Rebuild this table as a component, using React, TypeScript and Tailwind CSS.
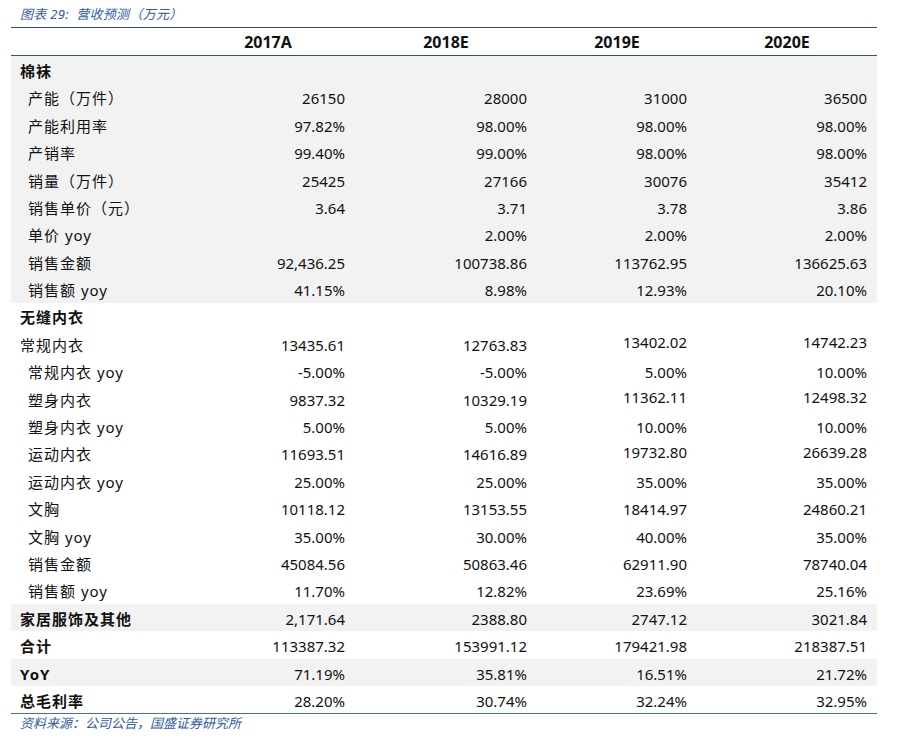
import React from 'react';

type Row = {
    label: string;
    values: string[];
    bold?: boolean;
    indent?: boolean;
    gray?: boolean;
    lift?: boolean;
};

const years = ['2017A', '2018E', '2019E', '2020E'];

const rows: Row[] = [
    { label: '棉袜', values: ['', '', '', ''], bold: true, gray: true },
    { label: '产能（万件）', values: ['26150', '28000', '31000', '36500'], indent: true, gray: true },
    { label: '产能利用率', values: ['97.82%', '98.00%', '98.00%', '98.00%'], indent: true, gray: true },
    { label: '产销率', values: ['99.40%', '99.00%', '98.00%', '98.00%'], indent: true, gray: true },
    { label: '销量（万件）', values: ['25425', '27166', '30076', '35412'], indent: true, gray: true },
    { label: '销售单价（元）', values: ['3.64', '3.71', '3.78', '3.86'], indent: true, gray: true },
    { label: '单价 yoy', values: ['', '2.00%', '2.00%', '2.00%'], indent: true, gray: true },
    { label: '销售金额', values: ['92,436.25', '100738.86', '113762.95', '136625.63'], indent: true, gray: true },
    { label: '销售额 yoy', values: ['41.15%', '8.98%', '12.93%', '20.10%'], indent: true, gray: true },
    { label: '无缝内衣', values: ['', '', '', ''], bold: true },
    { label: '常规内衣', values: ['13435.61', '12763.83', '13402.02', '14742.23'], lift: true },
    { label: '常规内衣 yoy', values: ['-5.00%', '-5.00%', '5.00%', '10.00%'], indent: true },
    { label: '塑身内衣', values: ['9837.32', '10329.19', '11362.11', '12498.32'], indent: true, lift: true },
    { label: '塑身内衣 yoy', values: ['5.00%', '5.00%', '10.00%', '10.00%'], indent: true },
    { label: '运动内衣', values: ['11693.51', '14616.89', '19732.80', '26639.28'], indent: true, lift: true },
    { label: '运动内衣 yoy', values: ['25.00%', '25.00%', '35.00%', '35.00%'], indent: true },
    { label: '文胸', values: ['10118.12', '13153.55', '18414.97', '24860.21'], indent: true },
    { label: '文胸 yoy', values: ['35.00%', '30.00%', '40.00%', '35.00%'], indent: true },
    { label: '销售金额', values: ['45084.56', '50863.46', '62911.90', '78740.04'], indent: true },
    { label: '销售额 yoy', values: ['11.70%', '12.82%', '23.69%', '25.16%'], indent: true },
    { label: '家居服饰及其他', values: ['2,171.64', '2388.80', '2747.12', '3021.84'], bold: true, gray: true },
    { label: '合计', values: ['113387.32', '153991.12', '179421.98', '218387.51'], bold: true },
    { label: 'YoY', values: ['71.19%', '35.81%', '16.51%', '21.72%'], bold: true, gray: true },
    { label: '总毛利率', values: ['28.20%', '30.74%', '32.24%', '32.95%'], bold: true },
];

const font = { fontFamily: '"Noto Sans", "Noto Sans CJK SC", sans-serif' };

export default function App() {
    return (
        <div className="w-[909px] h-[744px] bg-white pl-[11px] text-[#111]" style={font}>
            {/* Title */}
            <div className="h-[27px] pl-[9px] pt-[5px] text-[13px] leading-[18px] italic tracking-[0.3px] text-[#2f5c9f]">
                图表 29:&nbsp; 营收预测（万元）
            </div>

            <div className="w-[866px]">
                {/* Header */}
                <div className="grid grid-cols-[170px_174px_182px_160px_180px] h-[29px] border-y border-[#2c5491] text-[16px] font-bold">
                    <div />
                    {years.map((y) => (
                        <div key={y} className="flex items-center justify-center">{y}</div>
                    ))}
                </div>

                {/* Body */}
                {rows.map((row, i) => (
                    <div
                        key={i}
                        className={`grid grid-cols-[170px_174px_182px_160px_180px] h-[27.4px] text-[15px] ${row.gray ? 'bg-[#f2f2f2]' : 'bg-white'}`}
                    >
                        <div
                            className={`flex items-center pt-[3px] tracking-[1px] whitespace-nowrap ${row.indent ? 'pl-[17px]' : 'pl-[9px]'} ${row.bold ? 'font-bold' : ''}`}
                        >
                            {row.label}
                        </div>
                        {row.values.map((v, j) => (
                            <div
                                key={j}
                                className={`flex items-center justify-end pr-[10px] ${row.lift && j >= 2 ? 'pb-[2px] pt-0' : 'pt-[3px]'}`}
                            >
                                {v}
                            </div>
                        ))}
                    </div>
                ))}

                <div className="border-t-[1.5px] border-[#3b6fc2]" />
            </div>

            {/* Source */}
            <div className="pl-[9px] pt-[1px] text-[13px] leading-[16px] italic text-[#2f5c9f]">
                资料来源：公司公告，国盛证券研究所
            </div>
        </div>
    );
}
